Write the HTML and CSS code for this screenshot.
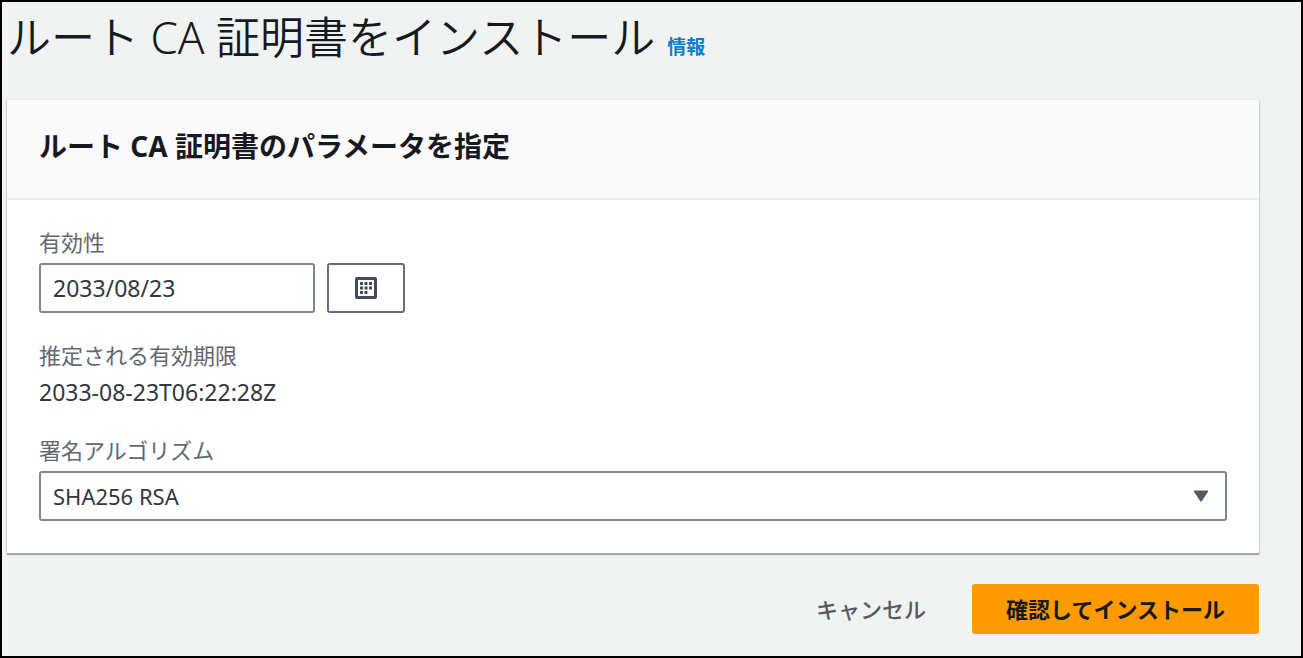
FILE: index.html
```html
<!DOCTYPE html>
<html lang="ja">
<head>
<meta charset="utf-8">
<title>ルート CA 証明書をインストール</title>
<link rel="stylesheet" href="styles.css">
</head>
<body>
<main class="page">
  <header class="page-header">
    <h1 class="page-title">ルート CA 証明書をインストール</h1>
    <a class="info-link" href="#info">情報</a>
  </header>
  <form class="form">
    <section class="card">
      <div class="card-header">
        <h2 class="card-title">ルート CA 証明書のパラメータを指定</h2>
      </div>
      <div class="card-body">
        <div class="field">
          <label class="label" for="validity">有効性</label>
          <div class="date-row">
            <input class="control date-input" id="validity" type="text" value="2033/08/23">
            <button class="calendar-button" type="button" aria-label="カレンダー">
              <svg class="calendar-icon" viewBox="0 0 22 22" aria-hidden="true">
                <rect x="1.500" y="1.500" width="19" height="19" rx="0.500" fill="none" stroke="#434d59" stroke-width="3"/>
                <path fill="#434d59" d="M5 5h3v3H5zM9.500 5h3v3h-3zM14 5h3v3h-3zM5 9.500h3v3H5zM9.500 9.500h3v3h-3zM14 9.500h3v3h-3zM5 14h3v3H5zM9.500 14h3v3h-3z"/>
              </svg>
            </button>
          </div>
        </div>
        <dl class="field expiry">
          <dt class="label">推定される有効期限</dt>
          <dd class="value">2033-08-23T06:22:28Z</dd>
        </dl>
        <div class="field">
          <label class="label" for="algorithm">署名アルゴリズム</label>
          <div class="select-wrap">
            <select class="control select" id="algorithm">
              <option>SHA256 RSA</option>
            </select>
            <svg class="select-arrow" viewBox="0 0 16 12" aria-hidden="true">
              <path d="M1 1h14L8 11.500z" fill="#545b64" stroke="#545b64" stroke-linejoin="round"/>
            </svg>
          </div>
        </div>
      </div>
    </section>
    <div class="actions">
      <button class="button link-button" type="button">キャンセル</button>
      <button class="button primary-button" type="submit">確認してインストール</button>
    </div>
  </form>
</main>
</body>
</html>
```
FILE: styles.css
```css
* {
  box-sizing: border-box;
}

body {
  margin: 0;
  background: #f1f3f3;
  color: #16191f;
  font-family: "Noto Sans", "Noto Sans CJK JP", sans-serif;
  font-size: 22px;
  line-height: 32px;
}

.page {
  min-height: 100vh;
  padding: 7px 42px 20px 5px;
  border: 2px solid #000;
}

.page-header {
  display: flex;
  align-items: baseline;
  gap: 12px;
  margin-bottom: 34px;
}

.page-title {
  margin: 0;
  font-size: 44px;
  font-weight: 350;
  line-height: 56px;
}

.info-link {
  color: #0f7cc4;
  font-size: 19px;
  font-weight: 700;
  text-decoration: none;
}

.card {
  background: #fff;
  border-top: 1px solid #eaeded;
  box-shadow: 0 2px 1px #a3acad, 1px 1px 1px #d5dbdb, -1px 1px 1px #d5dbdb;
}

.card-header {
  padding: 27px 32px 33px;
  background: #fafafa;
  border-bottom: 2px solid #eaeded;
}

.card-title {
  margin: 0;
  font-size: 28px;
  font-weight: 700;
  line-height: 38px;
}

.card-body {
  display: flex;
  flex-direction: column;
  gap: 26px;
  padding: 26px 32px 32px;
}

.field {
  margin: 0;
}

.label {
  display: block;
  margin-bottom: 5px;
  color: #606872;
}

.value {
  margin: 0;
  color: #33373e;
  font-size: 23px;
}

.date-row {
  display: flex;
  gap: 12px;
}

.control {
  height: 50px;
  padding: 0 12px;
  border: 2px solid #7d858e;
  border-radius: 3px;
  background: #fff;
  color: #33373e;
  font: inherit;
}

.date-input {
  width: 276px;
  font-size: 23px;
}

.calendar-button {
  display: flex;
  align-items: center;
  justify-content: center;
  width: 78px;
  padding: 0;
  border: 2px solid #656e78;
  border-radius: 3px;
  background: #fff;
}

.calendar-icon {
  width: 22px;
  height: 22px;
}

.select-wrap {
  position: relative;
}

.select {
  display: block;
  width: 100%;
  appearance: none;
}

.select-arrow {
  position: absolute;
  top: 19px;
  right: 18px;
  width: 16px;
  height: 12px;
  pointer-events: none;
}

.actions {
  display: flex;
  justify-content: flex-end;
  gap: 12px;
  margin-top: 31px;
}

.button {
  height: 50px;
  padding: 0 34px;
  border: 0;
  border-radius: 3px;
  font: inherit;
  font-weight: 700;
}

.link-button {
  background: transparent;
  color: #545b64;
  font-weight: 500;
}

.primary-button {
  background: #f90;
  color: #16191f;
}
```
